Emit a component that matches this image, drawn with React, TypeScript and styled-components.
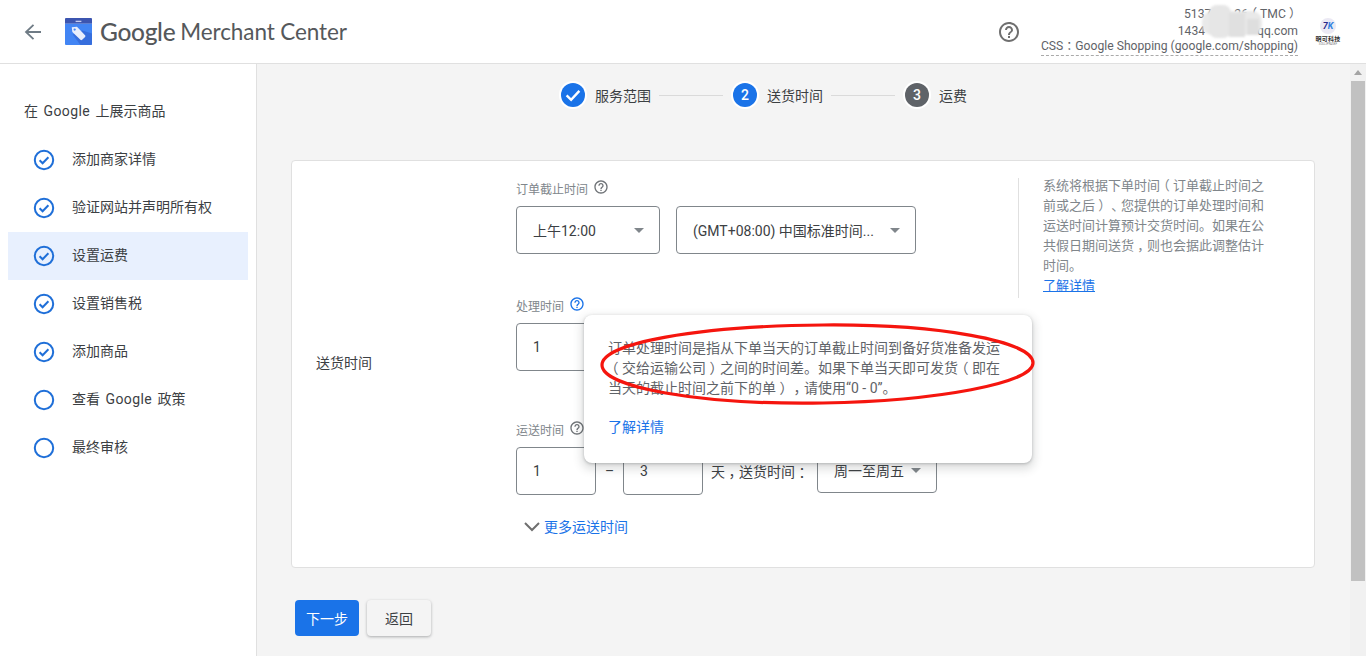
import React from "react";
import styled, { createGlobalStyle } from "styled-components";

const FONT = `Roboto, "Noto Sans CJK SC", sans-serif`;

const Global = createGlobalStyle`
  html, body { margin: 0; padding: 0; height: 656px; overflow: hidden; background: #fff; }
  body { font-family: ${FONT}; color: #3c4043; }
  #root { height: 656px; }
  * { box-sizing: border-box; }
`;

const Page = styled.div`
  display: flex;
  flex-direction: column;
  width: 1366px;
  height: 656px;
`;

const Header = styled.header`
  display: flex;
  align-items: center;
  height: 64px;
  flex: none;
  background: #fff;
  border-bottom: 1px solid #e0e0e0;
`;

const BackButton = styled.div`
  display: flex;
  width: 24px;
  height: 24px;
  margin-left: 21px;
  color: #6f7b85;
`;

const Brand = styled.div`
  display: flex;
  align-items: center;
  margin-left: 20px;
  color: #55585b;
`;

const BrandGoogle = styled.span`
  font-family: Lato, sans-serif;
  font-size: 24.5px;
  letter-spacing: -0.3px;
  margin-left: 8px;
  font-weight: 500;
`;

const BrandProduct = styled.span`
  font-family: Lato, sans-serif;
  font-size: 22.5px;
  margin-left: 5px;
  letter-spacing: -0.1px;
`;

const HeaderRight = styled.div`
  display: flex;
  align-items: center;
  align-self: stretch;
  margin-left: auto;
`;

const HelpButton = styled.div`
  display: flex;
  width: 24px;
  height: 24px;
  margin-right: 20px;
  color: #6f6f6f;
`;

const Account = styled.div`
  position: relative;
  align-self: flex-start;
  display: flex;
  flex-direction: column;
  align-items: flex-end;
  padding-top: 6px;
  font-size: 12.15px;
  color: #5f6368;
`;

const AccountName = styled.div`
  line-height: 17px;
  white-space: nowrap;
`;

const AccountMail = styled.div`
  line-height: 16px;
  white-space: nowrap;
`;

const Hidden = styled.span<{ $w: number }>`
  display: inline-block;
  width: ${(p) => p.$w}px;
`;

const AccountCss = styled.div`
  white-space: nowrap;
  border-bottom: 1px dashed #aaa;
  line-height: 15px;
  padding-bottom: 1px;
`;

const Mosaic = styled.svg`
  position: absolute;
  left: 160px;
  top: 5px;
  width: 62px;
  height: 33px;
  filter: blur(1px);
`;

const MiniLogo = styled.div`
  display: flex;
  flex-direction: column;
  align-items: center;
  width: 36px;
  margin: 0 20px 0 12px;
`;

const MiniMark = styled.div`
  display: flex;
  align-items: center;
  justify-content: center;
  width: 16px;
  height: 16px;
  border-radius: 50%;
  background: #ebe9f4;
  font: italic 700 9px/16px ${FONT};
  color: #2b2a8c;
`;

const MiniMarkK = styled.span`
  color: #2f7fe0;
`;

const MiniName = styled.div`
  margin-top: 1px;
  font-size: 6px;
  line-height: 8px;
  font-weight: 700;
  color: #333;
  white-space: nowrap;
  letter-spacing: 0.3px;
`;

const MiniTag = styled.div`
  font-size: 3px;
  line-height: 3px;
  color: #777;
`;

const Body = styled.div`
  display: flex;
  flex: 1;
  min-height: 0;
`;

const Sidebar = styled.nav`
  width: 257px;
  flex: none;
  background: #fff;
  border-right: 1px solid #e0e0e0;
  padding: 37px 8px 0;
`;

const SideTitle = styled.div`
  font-size: 14px;
  line-height: 20px;
  padding-left: 16px;
  margin-bottom: 15px;
  color: #3c4043;
  word-spacing: 2px;
`;

const Latin = styled.span`
  letter-spacing: 0.4px;
`;

const SideItem = styled.div<{ $active?: boolean }>`
  display: flex;
  align-items: center;
  gap: 16px;
  height: 48px;
  width: 240px;
  padding-left: 24px;
  font-size: 14px;
  word-spacing: 2px;
  background: ${(p) => (p.$active ? "#e8f0fe" : "transparent")};
  color: #3c4043;
`;

const SideText = styled.span`
  padding-bottom: 5px;
`;

const SideIcon = styled.svg`
  width: 24px;
  height: 24px;
  flex: none;
  color: #1f6fd8;
`;

const Main = styled.main`
  flex: 1;
  min-width: 0;
  background: #f4f4f4;
  padding: 0 35px 0 34px;
`;

const Steps = styled.div`
  display: flex;
  align-items: center;
  height: 62px;
  padding-left: 270px;
`;

const StepCircle = styled.div<{ $bg: string }>`
  display: flex;
  align-items: center;
  justify-content: center;
  width: 24px;
  height: 24px;
  border-radius: 50%;
  background: ${(p) => p.$bg};
  box-shadow: 0 0 0 2px #fff;
  color: #fff;
  font-size: 14px;
  font-weight: 500;
  flex: none;
`;

const StepLabel = styled.span`
  font-size: 14px;
  margin-left: 10px;
  color: #3c4043;
  white-space: nowrap;
`;

const StepLine = styled.div`
  width: 64px;
  height: 1px;
  background: #dadada;
  margin: 0 10px 0 8px;
`;

const Card = styled.section`
  display: flex;
  height: 408px;
  margin-top: 34px;
  background: #fff;
  border: 1px solid #e0e0e0;
  border-radius: 4px;
  padding: 17px 0 0 24px;
`;

const RowLabel = styled.div`
  width: 200px;
  flex: none;
  align-self: center;
  font-size: 14px;
  color: #3c4043;
  margin-top: -21px;
`;

const Fields = styled.div`
  width: 502px;
  flex: none;
`;

const Section = styled.div<{ $top: number }>`
  position: relative;
  margin-top: ${(p) => p.$top}px;
`;

const FieldLabel = styled.div`
  display: flex;
  align-items: center;
  gap: 5px;
  height: 20px;
  margin-bottom: 8px;
  font-size: 12px;
  color: #80868b;
`;

const InfoIcon = styled.svg<{ $blue?: boolean }>`
  width: 16px;
  height: 16px;
  margin-top: -3px;
  color: ${(p) => (p.$blue ? "#1a73e8" : "#6f7377")};
`;

const Controls = styled.div`
  display: flex;
  align-items: flex-start;
`;

const SelectBox = styled.div<{ $w: number; $h?: number; $ml?: number }>`
  display: flex;
  align-items: center;
  justify-content: space-between;
  width: ${(p) => p.$w}px;
  height: ${(p) => p.$h ?? 48}px;
  margin-left: ${(p) => p.$ml ?? 0}px;
  padding: 0 15px 0 16px;
  border: 1px solid #80868b;
  border-radius: 4px;
  background: #fff;
  font-size: 14px;
  color: #3c4043;
  white-space: nowrap;
`;

const Caret = styled.span`
  width: 0;
  height: 0;
  border-left: 5px solid transparent;
  border-right: 5px solid transparent;
  border-top: 5px solid #80868b;
  flex: none;
`;

const NumberBox = styled.div`
  display: flex;
  align-items: center;
  width: 80px;
  height: 48px;
  padding-left: 16px;
  border: 1px solid #80868b;
  border-radius: 4px;
  background: #fff;
  font-size: 14px;
  color: #3c4043;
`;

const Dash = styled.span`
  display: flex;
  align-items: center;
  justify-content: center;
  width: 27px;
  height: 48px;
  font-size: 14px;
  color: #3c4043;
`;

const InlineText = styled.span`
  display: flex;
  align-items: center;
  width: 114px;
  height: 48px;
  padding-left: 8px;
  font-size: 14px;
  color: #3c4043;
  white-space: nowrap;
`;

const MoreLink = styled.div`
  display: flex;
  align-items: center;
  gap: 3px;
  margin: 22px 0 0 7px;
  font-size: 14px;
  line-height: 20px;
  color: #1a73e8;
`;

const More = styled.svg`
  width: 18px;
  height: 18px;
  color: #6f6f6f;
`;

const Popup = styled.div`
  position: absolute;
  left: 68px;
  top: 20px;
  width: 448px;
  height: 148px;
  padding: 23px 24px 0;
  background: #fff;
  border-radius: 8px;
  box-shadow: 0 1px 3px rgba(60, 64, 67, 0.3), 0 4px 8px 3px rgba(60, 64, 67, 0.15);
  font-size: 14px;
  line-height: 20px;
  color: #5f6368;
  z-index: 2;
`;

const TextLine = styled.div`
  white-space: nowrap;
`;

const PopupLink = styled.div`
  margin-top: 19px;
  color: #1a73e8;
`;

const Ellipse = styled.svg`
  position: absolute;
  left: 14px;
  top: 6px;
  width: 440px;
  height: 90px;
  overflow: visible;
  pointer-events: none;
`;

const HelpPanel = styled.aside`
  align-self: flex-start;
  width: 250px;
  height: 120px;
  padding-left: 24px;
  border-left: 1px solid #e0e0e0;
  font-size: 13px;
  line-height: 20px;
  color: #80868b;
`;

const HelpText = styled.div`
  margin-top: -2px;
`;

const HelpLink = styled.a`
  display: block;
  color: #1a73e8;
  text-decoration: underline;
`;

const Actions = styled.div`
  display: flex;
  gap: 8px;
  margin: 32px 0 0 4px;
`;

const Btn = styled.div<{ $primary?: boolean }>`
  display: flex;
  align-items: center;
  justify-content: center;
  width: 64px;
  height: 36px;
  border-radius: 4px;
  font-size: 14px;
  background: ${(p) => (p.$primary ? "#1a73e8" : "#f4f4f4")};
  color: ${(p) => (p.$primary ? "#fff" : "#3c4043")};
  box-shadow: ${(p) => (p.$primary ? "none" : "0 1px 3px rgba(60,64,67,.4)")};
`;

const Scrollbar = styled.div`
  display: flex;
  flex-direction: column;
  align-items: center;
  width: 16px;
  flex: none;
  background: #f1f1f1;
`;

const ScrollArrow = styled.span`
  width: 0;
  height: 0;
  margin: 6px 0;
  border-left: 4px solid transparent;
  border-right: 4px solid transparent;
  border-bottom: 5px solid #a3a3a3;
`;

const ScrollThumb = styled.div`
  width: 14px;
  height: 500px;
  background: #c1c1c1;
`;

/* The reference's CJK font centres full-width punctuation in its em box. */
const Punct = styled.span`
  display: inline-block;
  width: 1em;
  text-align: center;
  font-feature-settings: "halt";
`;

const Cjk = ({ children }: { children: string }) => (
  <>
    {children.split(/([（），：、])/).map((part, i) =>
      /^[（），：、]$/.test(part) ? <Punct key={i}>{part}</Punct> : part
    )}
  </>
);

const CheckCircle = () => (
  <SideIcon viewBox="0 0 24 24" fill="none" stroke="currentColor">
    <circle cx="12" cy="12" r="9.2" strokeWidth="2" />
    <path d="M7.6 12.2l3 3 5.8-6" strokeWidth="2" />
  </SideIcon>
);

const EmptyCircle = () => (
  <SideIcon viewBox="0 0 24 24" fill="none" stroke="currentColor">
    <circle cx="12" cy="12" r="9.2" strokeWidth="2" />
  </SideIcon>
);

const QUESTION =
  "M11 18h2v-2h-2v2zm1-16C6.48 2 2 6.48 2 12s4.48 10 10 10 10-4.48 10-10S17.52 2 12 2zm0 18c-4.41 0-8-3.59-8-8s3.59-8 8-8 8 3.59 8 8-3.59 8-8 8zm0-14c-2.21 0-4 1.79-4 4h2c0-1.1.9-2 2-2s2 .9 2 2c0 2-3 1.75-3 5h2c0-2.25 3-2.5 3-5 0-2.21-1.79-4-4-4z";

const Help = ({ blue }: { blue?: boolean }) => (
  <InfoIcon $blue={blue} viewBox="0 0 24 24" fill="currentColor">
    <path d={QUESTION} />
  </InfoIcon>
);

const sideItems: { pre: string; latin?: string; post?: string; done: boolean; active?: boolean }[] = [
  { pre: "添加商家详情", done: true },
  { pre: "验证网站并声明所有权", done: true },
  { pre: "设置运费", done: true, active: true },
  { pre: "设置销售税", done: true },
  { pre: "添加商品", done: true },
  { pre: "查看 ", latin: "Google", post: " 政策", done: false },
  { pre: "最终审核", done: false },
];

const popupLines = [
  "订单处理时间是指从下单当天的订单截止时间到备好货准备发运",
  "（交给运输公司）之间的时间差。如果下单当天即可发货（即在",
  "当天的截止时间之前下的单），请使用“0 - 0”。",
];

const helpLines = [
  "系统将根据下单时间（订单截止时间之",
  "前或之后）、您提供的订单处理时间和",
  "运送时间计算预计交货时间。如果在公",
  "共假日期间送货，则也会据此调整估计",
  "时间。",
];

export default function App() {
  return (
    <Page>
      <Global />
      <Header>
        <BackButton>
          <svg viewBox="0 0 24 24" width="24" height="24" fill="none" stroke="currentColor" strokeWidth="1.8">
            <path d="M20 12H5.5M12.5 4.8L5 12l7.5 7.2" />
          </svg>
        </BackButton>
        <Brand>
          <svg width="27" height="27" viewBox="0 0 28 28">
            <path d="M1 0h26a1 1 0 0 1 1 1v5H0V1a1 1 0 0 1 1-1z" fill="#3c55b0" />
            <path d="M0 6h28v21a1 1 0 0 1-1 1H1a1 1 0 0 1-1-1z" fill="#4285f4" />
            <path d="M11 3.5h6" stroke="#c5cdf0" strokeWidth="1.4" />
            <path d="M28 16v11a1 1 0 0 1-1 1H16L8 17l10-4z" fill="#3367d6" opacity="0.75" />
            <path d="M7 9.6l5.4-.6 8.4 8.8a1.3 1.3 0 0 1 0 1.8l-3 3a1.3 1.3 0 0 1-1.8 0L7.6 14.4z" fill="#e8eefc" />
            <circle cx="10" cy="12" r="1.2" fill="#4285f4" />
          </svg>
          <BrandGoogle>Google</BrandGoogle>
          <BrandProduct>Merchant Center</BrandProduct>
        </Brand>
        <HeaderRight>
          <HelpButton>
            <svg viewBox="0 0 24 24" width="24" height="24" fill="currentColor">
              <path d={QUESTION} />
            </svg>
          </HelpButton>
          <Account>
            <AccountName>
              5137
              <Hidden $w={23} />
              26<Cjk>（</Cjk>TMC<Cjk>）</Cjk>
            </AccountName>
            <AccountMail>
              1434
              <Hidden $w={52} />
              qq.com
            </AccountMail>
            <AccountCss>
              CSS<Cjk>：</Cjk>Google Shopping (google.com/shopping)
            </AccountCss>
            <Mosaic viewBox="0 0 62 33">
              <rect x="1" y="6" width="60" height="24" rx="10" fill="#e9e9e9" />
              <rect x="8" y="0" width="22" height="33" rx="8" fill="#e6e6e6" />
              <rect x="28" y="8" width="16" height="24" fill="#e0e0e0" />
              <rect x="46" y="14" width="12" height="16" fill="#dedede" />
            </Mosaic>
          </Account>
          <MiniLogo>
            <MiniMark>
              7<MiniMarkK>K</MiniMarkK>
            </MiniMark>
            <MiniName>明可科技</MiniName>
            <MiniTag>SOLLIPFASEF</MiniTag>
          </MiniLogo>
        </HeaderRight>
      </Header>
      <Body>
        <Sidebar>
          <SideTitle>
            在 <Latin>Google</Latin> 上展示商品
          </SideTitle>
          {sideItems.map((it) => (
            <SideItem key={it.pre} $active={it.active}>
              {it.done ? <CheckCircle /> : <EmptyCircle />}
              <SideText>
                {it.pre}
                {it.latin && <Latin>{it.latin}</Latin>}
                {it.post}
              </SideText>
            </SideItem>
          ))}
        </Sidebar>
        <Main>
          <Steps>
            <StepCircle $bg="#1a73e8">
              <svg width="18" height="18" viewBox="0 0 24 24" fill="none" stroke="#fff" strokeWidth="3.2">
                <path d="M3.5 12.5l6 6L20.5 6.5" />
              </svg>
            </StepCircle>
            <StepLabel>服务范围</StepLabel>
            <StepLine />
            <StepCircle $bg="#1a73e8">2</StepCircle>
            <StepLabel>送货时间</StepLabel>
            <StepLine />
            <StepCircle $bg="#5f6368">3</StepCircle>
            <StepLabel>运费</StepLabel>
          </Steps>
          <Card>
            <RowLabel>送货时间</RowLabel>
            <Fields>
              <Section $top={0}>
                <FieldLabel>
                  订单截止时间 <Help />
                </FieldLabel>
                <Controls>
                  <SelectBox $w={144}>
                    上午12:00
                    <Caret />
                  </SelectBox>
                  <SelectBox $w={240} $ml={16}>
                    (GMT+08:00) 中国标准时间...
                    <Caret />
                  </SelectBox>
                </Controls>
              </Section>
              <Section $top={41}>
                <FieldLabel>
                  处理时间 <Help blue />
                </FieldLabel>
                <Controls>
                  <NumberBox>1</NumberBox>
                </Controls>
                <Popup>
                  {popupLines.map((line) => (
                    <TextLine key={line}>
                      <Cjk>{line}</Cjk>
                    </TextLine>
                  ))}
                  <PopupLink>了解详情</PopupLink>
                  <Ellipse viewBox="0 0 440 90">
                    <path
                      d="M4 44C4 22 100 5 225 4C340 3 435 20 435 42C435 62 340 80 225 82C100 84 4 66 4 44z"
                      fill="none"
                      stroke="#f5150e"
                      strokeWidth="3.2"
                    />
                  </Ellipse>
                </Popup>
              </Section>
              <Section $top={48}>
                <FieldLabel>
                  运送时间 <Help />
                </FieldLabel>
                <Controls>
                  <NumberBox>1</NumberBox>
                  <Dash>–</Dash>
                  <NumberBox>3</NumberBox>
                  <InlineText>
                    <Cjk>天，送货时间：</Cjk>
                  </InlineText>
                  <SelectBox $w={120} $h={46}>
                    周一至周五
                    <Caret />
                  </SelectBox>
                </Controls>
              </Section>
              <MoreLink>
                <More viewBox="0 0 18 18" fill="none" stroke="currentColor" strokeWidth="2">
                  <path d="M2 5l7 7 7-7" />
                </More>
                更多运送时间
              </MoreLink>
            </Fields>
            <HelpPanel>
              <HelpText>
                {helpLines.map((line) => (
                  <TextLine key={line}>
                    <Cjk>{line}</Cjk>
                  </TextLine>
                ))}
                <HelpLink>了解详情</HelpLink>
              </HelpText>
            </HelpPanel>
          </Card>
          <Actions>
            <Btn $primary>下一步</Btn>
            <Btn>返回</Btn>
          </Actions>
        </Main>
        <Scrollbar>
          <ScrollArrow />
          <ScrollThumb />
        </Scrollbar>
      </Body>
    </Page>
  );
}
